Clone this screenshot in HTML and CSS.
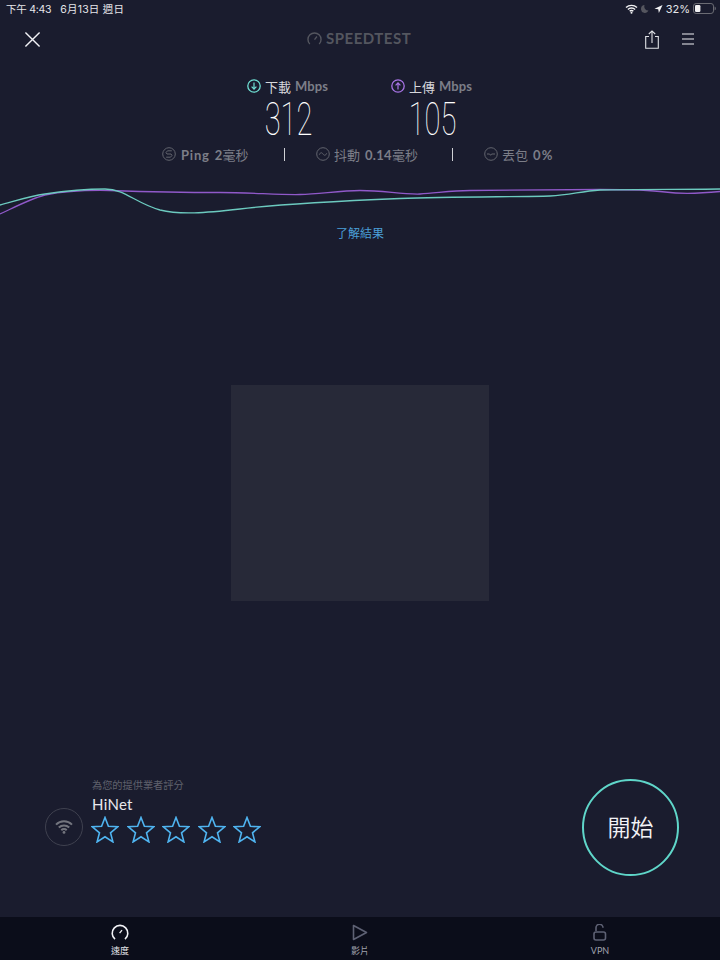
FILE: index.html
```
<!DOCTYPE html>
<html lang="zh-Hant">
<head>
<meta charset="utf-8">
<title>Speedtest</title>
<link rel="stylesheet" href="styles.css">
</head>
<body>
<div class="app">
  <div class="status">
    <div class="status-left"><span class="time">下午 4:43</span><span class="date">6月13日 週日</span></div>
    <div class="status-right">
      <svg width="13" height="10" viewBox="0 0 13 10"><path d="M1 3.600a7.800 7.800 0 0 1 11 0M2.900 5.500a5 5 0 0 1 7.200 0M4.700 7.300a2.400 2.400 0 0 1 3.600 0" fill="none" stroke="#f2f2f4" stroke-width="1.400"/><circle cx="6.500" cy="8.700" r="1" fill="#f2f2f4"/></svg>
      <svg width="8" height="10" viewBox="0 0 9 10"><path d="M4 .6a4.400 4.400 0 1 0 4.400 6.200A4.600 4.600 0 0 1 4 .6z" fill="#55565f"/></svg>
      <svg class="loc" width="9" height="10" viewBox="0 0 10 10"><path d="M9.500.5L.5 4.600l4.200.7.700 4.200z" fill="#f2f2f4"/></svg>
      <span>32%</span>
      <svg width="23" height="11" viewBox="0 0 23 11"><rect x=".5" y=".5" width="20" height="10" rx="2.600" fill="none" stroke="#6b6c74"/><rect x="2" y="2" width="5.400" height="7" rx="1.200" fill="#f2f2f4"/><path d="M21.600 3.600c.8.3 1.200 1 1.200 1.900s-.4 1.600-1.200 1.900z" fill="#6b6c74"/></svg>
    </div>
  </div>

  <header class="topbar">
    <svg class="close" width="17" height="17" viewBox="0 0 18 18"><path d="M1.500 1.500l15 15M16.500 1.500l-15 15" stroke="#f2f2f6" stroke-width="1.500" fill="none"/></svg>
    <div class="logo">
      <svg width="15" height="14" viewBox="0 0 16 15"><path d="M3 14a7 7 0 1 1 10 0" fill="none" stroke="#54565f" stroke-width="1.500"/><path d="M8 9.300l2.600-3.400" stroke="#54565f" stroke-width="1.400"/></svg>
      <span>SPEEDTEST</span>
    </div>
    <div class="top-actions">
      <svg width="14" height="19" viewBox="0 0 14 19"><path d="M4 6.500H.7v11.800h12.600V6.500H10M7 13V1M3.800 4L7 .9 10.200 4" fill="none" stroke="#e0e1e6" stroke-width="1.100"/></svg>
      <svg width="12" height="12" viewBox="0 0 12 12"><path d="M0 1h12M0 6h12M0 11h12" stroke="#f0f0f4" stroke-width="1.200"/></svg>
    </div>
  </header>

  <section class="speeds">
    <div class="speed">
      <div class="speed-label">
        <svg width="14" height="14" viewBox="0 0 14 14"><circle cx="7" cy="7" r="6.200" fill="none" stroke="#6fdfd3" stroke-width="1.300"/><path d="M7 3.500v6.500M4.600 7.700L7 10.100l2.400-2.400" fill="none" stroke="#6fdfd3" stroke-width="1.200"/></svg>
        <span class="label-main">下載</span><span class="label-unit">Mbps</span>
      </div>
      <div class="speed-value">312</div>
    </div>
    <div class="speed">
      <div class="speed-label">
        <svg width="14" height="14" viewBox="0 0 14 14"><circle cx="7" cy="7" r="6.200" fill="none" stroke="#a874e6" stroke-width="1.300"/><path d="M7 10.500V4M4.600 6.300L7 3.900l2.400 2.400" fill="none" stroke="#a874e6" stroke-width="1.200"/></svg>
        <span class="label-main">上傳</span><span class="label-unit">Mbps</span>
      </div>
      <div class="speed-value">105</div>
    </div>
  </section>

  <section class="metrics">
    <div class="metric metric-ping">
      <svg width="14" height="14" viewBox="0 0 14 14"><circle cx="7" cy="7" r="6.300" fill="none" stroke="#62646d"/><path d="M9.800 3.800H5.500L4 5.600 5 7h4l1 1.400-1.500 1.800H4.200" fill="none" stroke="#62646d"/></svg>
      <span class="metric-text"><b class="ping">Ping</b><b class="gap">2</b>毫秒</span>
    </div>
    <i class="sep"></i>
    <div class="metric metric-jitter">
      <svg width="14" height="14" viewBox="0 0 14 14"><circle cx="7" cy="7" r="6.300" fill="none" stroke="#62646d"/><path d="M3.300 7.700C4.500 5 6 5.500 7 7s2.500 2 3.700-.7" fill="none" stroke="#62646d"/></svg>
      <span class="metric-text">抖動<b class="gap">0.14</b>毫秒</span>
    </div>
    <i class="sep"></i>
    <div class="metric metric-loss">
      <svg width="14" height="14" viewBox="0 0 14 14"><circle cx="7" cy="7" r="6.300" fill="none" stroke="#62646d"/><path d="M3 7h2.600l1 1.300L7.600 7H11M9 7h.01" fill="none" stroke="#62646d"/></svg>
      <span class="metric-text">丟包<b class="gap loss">0%</b></span>
    </div>
  </section>

  <svg class="chart" width="720" height="44" viewBox="0 0 720 44" preserveAspectRatio="none">
    <path d="M0 39C15 32 30 24 45 20C60 17 85 15 110 15.500C140 16.500 180 17.500 220 17.500C250 17.500 280 20 300 19.500C320 19 340 15.500 360 15.500C385 15.500 400 19.500 420 19C435 18.500 450 15.500 470 15.500C520 15 570 14.500 600 14.500C630 14.500 650 15 665 17C680 19 700 18.500 720 16.500" fill="none" stroke="#9059c9" stroke-width="1.300"/>
    <path d="M0 30C15 26 30 21 45 19C65 16 90 14 105 14C125 14 135 28 160 35C180 40 205 38 240 34C280 29 340 26 400 23.500C450 21.500 520 22 550 21C570 20 580 16.500 600 15C630 14 680 14.500 720 14" fill="none" stroke="#6ccabf" stroke-width="1.300"/>
  </svg>

  <a class="result-link" href="#">了解結果</a>

  <main class="stage"><div class="ad"></div></main>

  <section class="bottom">
    <div class="provider">
      <div class="wifi-ring">
        <svg width="18" height="14" viewBox="0 0 18 14"><path d="M1 4.600a11.500 11.500 0 0 1 16 0M3.800 7.500a7.500 7.500 0 0 1 10.400 0M6.300 10.200a3.700 3.700 0 0 1 5.400 0" fill="none" stroke="#73757e" stroke-width="2"/><circle cx="9" cy="12.400" r="1.400" fill="#73757e"/></svg>
      </div>
      <div class="provider-info">
        <div class="rate-hint">為您的提供業者評分</div>
        <div class="isp">HiNet</div>
        <div class="stars">
          <svg width="28" height="27" viewBox="0 0 28 27"><path d="M14 1.500l3.400 8.800 9.300.5-7.200 6 2.400 9.100-7.900-5.100-7.900 5.100 2.400-9.100-7.200-6 9.300-.5z" fill="none" stroke="#4fb4f0" stroke-width="1.600"/></svg>
          <svg width="28" height="27" viewBox="0 0 28 27"><path d="M14 1.500l3.400 8.800 9.300.5-7.200 6 2.400 9.100-7.900-5.100-7.900 5.100 2.400-9.100-7.200-6 9.300-.5z" fill="none" stroke="#4fb4f0" stroke-width="1.600"/></svg>
          <svg width="28" height="27" viewBox="0 0 28 27"><path d="M14 1.500l3.400 8.800 9.300.5-7.200 6 2.400 9.100-7.900-5.100-7.900 5.100 2.400-9.100-7.200-6 9.300-.5z" fill="none" stroke="#4fb4f0" stroke-width="1.600"/></svg>
          <svg width="28" height="27" viewBox="0 0 28 27"><path d="M14 1.500l3.400 8.800 9.300.5-7.200 6 2.400 9.100-7.900-5.100-7.900 5.100 2.400-9.100-7.200-6 9.300-.5z" fill="none" stroke="#4fb4f0" stroke-width="1.600"/></svg>
          <svg width="28" height="27" viewBox="0 0 28 27"><path d="M14 1.500l3.400 8.800 9.300.5-7.200 6 2.400 9.100-7.900-5.100-7.900 5.100 2.400-9.100-7.200-6 9.300-.5z" fill="none" stroke="#4fb4f0" stroke-width="1.600"/></svg>
        </div>
      </div>
    </div>
    <button class="go">開始</button>
  </section>

  <nav class="tabs">
    <div class="tab tab-active">
      <svg width="18" height="17" viewBox="0 0 18 17"><path d="M4 15.200a7.800 7.800 0 1 1 10 0" fill="none" stroke="#f2f2f6" stroke-width="1.600"/><path d="M8.600 9.200l2.400-3" stroke="#f2f2f6" stroke-width="1.300"/></svg>
      <span>速度</span>
    </div>
    <div class="tab">
      <svg width="16" height="17" viewBox="0 0 16 17"><path d="M1.500 1.500v14L14.500 8.500z" fill="none" stroke="#5e6174" stroke-width="1.600" stroke-linejoin="round"/></svg>
      <span>影片</span>
    </div>
    <div class="tab">
      <svg width="14" height="17" viewBox="0 0 14 17"><path d="M3 7V3.800a3.500 3.500 0 0 1 7 0" fill="none" stroke="#5e6174" stroke-width="1.600"/><rect x="1" y="8" width="11.500" height="8" rx="2" fill="none" stroke="#5e6174" stroke-width="1.600"/></svg>
      <span>VPN</span>
    </div>
  </nav>
</div>
</body>
</html>
```

FILE: styles.css
```
* { box-sizing: border-box; }
html, body { margin: 0; height: 100%; }
body {
  background: #1a1c2e;
  color: #f2f2f6;
  font-family: "Lato", "Noto Sans CJK TC", sans-serif;
}
.app {
  width: 720px;
  height: 960px;
  display: flex;
  flex-direction: column;
  overflow: hidden;
}
.status {
  height: 17px;
  padding: 0 4px 0 6px;
  display: flex;
  justify-content: space-between;
  align-items: center;
  font-family: "Inter", "Noto Sans CJK TC", sans-serif;
  font-size: 10.500px;
  color: #e6e6ea;
}
.status-left { display: flex; gap: 9px; }
.time { letter-spacing: -.25px; }
.date { letter-spacing: .2px; }
.status-right { display: flex; align-items: center; gap: 3px; }
.status-right svg { flex: none; }
.status-right .loc { margin-left: 2px; }
.status-right span { font-size: 11px; }

.topbar {
  height: 44px;
  padding: 0 26px 0 24px;
  display: flex;
  align-items: center;
  justify-content: space-between;
  position: relative;
}
.logo {
  position: absolute;
  left: 307px;
  top: 12px;
  display: flex;
  align-items: center;
  gap: 4px;
  color: #54565f;
  font-size: 15px;
  font-weight: 700;
  letter-spacing: .5px;
}
.top-actions { display: flex; align-items: center; gap: 23px; }

.speeds {
  height: 60px;
  margin-top: 17px;
  display: flex;
  justify-content: center;
  gap: 62px;
  padding-right: 1px;
}
.speed { width: 82px; display: flex; flex-direction: column; align-items: center; }
.speed-label {
  display: flex;
  align-items: center;
  gap: 4px;
  height: 16px;
  font-size: 13px;
  white-space: nowrap;
}
.label-main { color: #d6d7dc; }
.label-unit { color: #7c7e88; font-weight: 700; letter-spacing: .1px; }
.speed-value {
  font-family: "Roboto", sans-serif;
  font-weight: 100;
  font-size: 47px;
  line-height: 42px;
  color: #fff;
  transform: scaleX(.62);
  margin: 4px 0 0 3px;
}

.metrics {
  height: 20px;
  margin-top: 6px;
  display: flex;
  align-items: center;
  color: #7c7e88;
  font-size: 13px;
  padding-left: 162px;
}
.metric { display: flex; align-items: center; gap: 4px; white-space: nowrap; }
.metric-ping { width: 122px; gap: 5px; }
.metric-jitter { width: 167px; padding-left: 31px; }
.metric-loss { padding-left: 31px; }
.metric b { font-weight: 700; letter-spacing: .3px; }
.metric b.ping { letter-spacing: .8px; }
.metric b.loss { letter-spacing: 1.200px; }
.gap { margin-left: 5px; }
.sep { width: 1px; height: 13px; background: #d0d1d6; flex: none; }
.chart { display: block; margin-top: 11px; flex: none; }

.result-link {
  align-self: center;
  margin-top: 6px;
  height: 18px;
  line-height: 18px;
  font-size: 12px;
  color: #4a9fd8;
  text-decoration: none;
}
.stage {
  flex: 1;
  display: flex;
  justify-content: center;
  padding-top: 142px;
}
.ad { width: 258px; height: 216px; background: #272938; }

.bottom {
  height: 140px;
  padding: 0 41px 0 45px;
  display: flex;
  justify-content: space-between;
  align-items: flex-start;
}
.provider { display: flex; align-items: flex-start; gap: 9px; }
.wifi-ring {
  width: 38px;
  height: 38px;
  margin-top: 31px;
  border: 1.500px solid #3f414f;
  border-radius: 50%;
  display: flex;
  align-items: center;
  justify-content: center;
}
.rate-hint { font-size: 10.200px; line-height: 14px; color: #5f616c; margin-top: 1px; }
.isp { font-size: 15px; line-height: 18px; margin-top: 3px; color: #e8e8ec; letter-spacing: .3px; }
.stars { display: flex; gap: 7.500px; margin-left: -1px; margin-top: 3px; }
.go {
  width: 97px;
  height: 97px;
  margin-top: 2px;
  border: 2px solid #5fd6c9;
  border-radius: 50%;
  background: transparent;
  color: #f2f2f6;
  font-family: "Noto Sans CJK TC", sans-serif;
  font-size: 23px;
  font-weight: 350;
  padding: 0 0 4px;
}
.tabs {
  height: 43px;
  background: #0b0d1a;
  display: grid;
  grid-template-columns: 240px 240px 240px;
  flex: none;
}
.tab {
  display: flex;
  flex-direction: column;
  align-items: center;
  padding-top: 7px;
  font-size: 9px;
  color: #a0a2ad;
}
.tab span { line-height: 12px; margin-top: 4px; }
.tab-active { color: #e6e6ea; }
```
